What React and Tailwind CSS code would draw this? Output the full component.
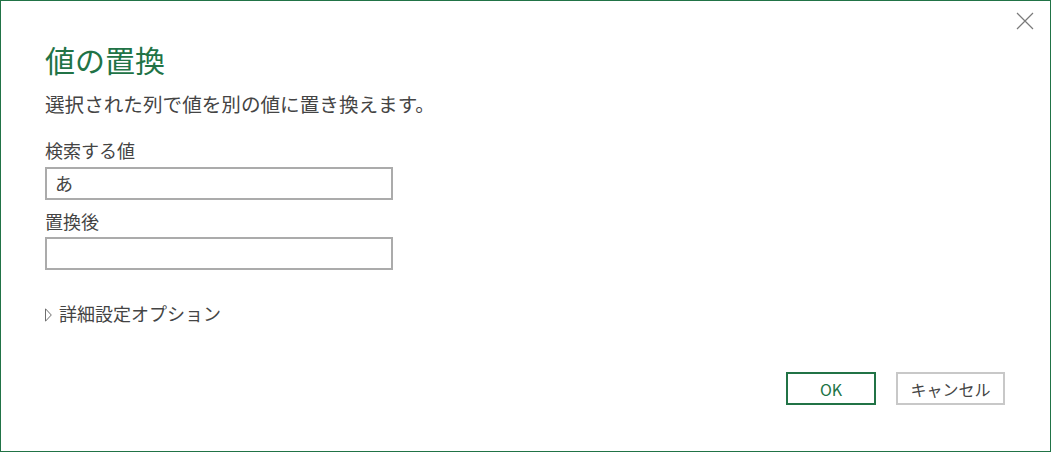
import React from 'react';

const font = { fontFamily: '"Noto Sans CJK JP", "Noto Sans", sans-serif' };

const CloseIcon = () => (
  <svg width="18" height="18" viewBox="0 0 18 18" className="text-[#7a7a7a]">
    <path d="M1 1 L17 17 M17 1 L1 17" stroke="currentColor" strokeWidth="1.2" fill="none" />
  </svg>
);

export default function App() {
  return (
    <div
      className="relative w-[1051px] h-[452px] bg-white border border-[#217346] text-[#444444]"
      style={font}
    >
      {/* close */}
      <button className="absolute right-[16px] top-[11px] p-0">
        <CloseIcon />
      </button>

      <div className="flex flex-col pl-[44px] pr-[45px] pt-[40px]">
        <h1 className="text-[30px] leading-[36px] text-[#217346] font-normal">値の置換</h1>
        <p className="mt-[13px] text-[19.6px] leading-[28px]">選択された列で値を別の値に置き換えます。</p>

        <label className="mt-[20px] text-[18px] leading-[24px]">検索する値</label>
        <div className="mt-[5px] w-[348px] h-[33px] border-2 border-[#ababab] flex items-center px-[8px] text-[18px]">
          あ
        </div>

        <label className="mt-[9px] text-[18px] leading-[24px]">置換後</label>
        <div className="mt-[4px] w-[348px] h-[33px] border-2 border-[#ababab]" />

        <div className="mt-[31px] flex items-center gap-[7px] text-[18px] leading-[24px]">
          <svg width="7" height="14" viewBox="0 0 7 14" className="mt-[4px]">
            <path d="M0.5 0.8 L6.3 7 L0.5 13.2 Z" fill="none" stroke="#6e6e6e" strokeWidth="1" />
          </svg>
          <span>詳細設定オプション</span>
        </div>

        <div className="mt-[47px] flex justify-end gap-[20px]">
          <button className="w-[90px] h-[33px] border-2 border-[#217346] text-[#217346] text-[16px] flex items-center justify-center">
            OK
          </button>
          <button className="w-[109px] h-[33px] border-2 border-[#c8c8c8] text-[#444444] text-[16px] flex items-center justify-center">
            キャンセル
          </button>
        </div>
      </div>
    </div>
  );
}
